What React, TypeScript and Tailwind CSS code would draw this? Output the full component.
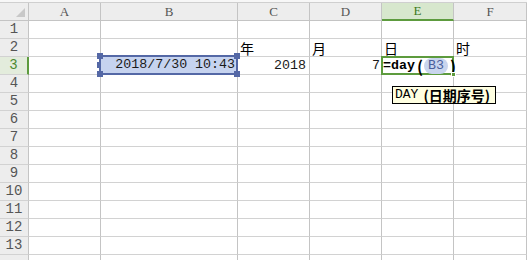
import React from "react";

const cols = ["A", "B", "C", "D", "E", "F"];
const mono = { fontFamily: '"Liberation Mono", "Noto Sans CJK SC", monospace' };
const cjk = { fontFamily: '"Noto Sans CJK SC", sans-serif' };

function Cell({ children, className = "" }: { children?: React.ReactNode; className?: string }) {
  return (
    <div className={`relative flex h-[18px] border-r border-b border-b-[#d2d2d2] border-r-[#c4c4c4] ${className}`}>
      {children}
    </div>
  );
}

function Handle({ pos }: { pos: string }) {
  return <span className={`absolute w-[6px] h-[6px] bg-[#5468a6] ${pos}`} />;
}

export default function App() {
  const rows = Array.from({ length: 14 }, (_, i) => i + 1);
  return (
    <div className="w-[527px] h-[260px] overflow-hidden bg-white select-none" style={mono}>
      <div className="h-[3px] bg-[#f7f7f7] border-b border-[#cfcfcf]" />
      <div className="grid grid-cols-[29px_72px_137px_72px_72px_72px_73px]">
        {/* header row */}
        <div className="flex items-end justify-end p-[3px] h-[18px] border-r border-b border-[#c4c4c4] bg-[#ededed]">
          <svg width="9" height="9" viewBox="0 0 9 9">
            <polygon points="9,0 9,9 0,9" fill="#c8c8c8" />
          </svg>
        </div>
        {cols.map((c) => (
          <div
            key={c}
            className={`h-[18px] flex items-center justify-center border-r text-[13px] ${
              c === "E"
                ? "bg-[#d7e7cd] border-b-2 border-b-[#5d9b3e] border-r-[#c4c4c4] text-[#3c7a22]"
                : "bg-[#ededed] border-b border-[#c4c4c4] text-[#555]"
            }`}
            style={{ fontFamily: '"Liberation Serif", serif' }}
          >
            {c}
          </div>
        ))}
        {rows.map((r) => (
          <React.Fragment key={r}>
            <div
              className={`h-[18px] flex items-center justify-center border-b border-[#d2d2d2] text-[14px] ${
                r === 3
                  ? "bg-[#e3ecdc] border-r-2 border-r-[#5d9b3e] text-[#4c8a30]"
                  : "bg-[#ededed] border-r border-r-[#c4c4c4] text-[#555]"
              }`}
            >
              {r < 14 ? r : ""}
            </div>
            {cols.map((c) => {
              let content: React.ReactNode = null;
              let cls = "";
              if (r === 2) {
                const m: Record<string, string> = { C: "年", D: "月", E: "日", F: "时" };
                if (m[c]) {
                  cls = "items-end pl-[2px]";
                  content = (
                    <span className="text-[14px] leading-[16px] text-black whitespace-nowrap" style={cjk}>
                      {m[c]}
                    </span>
                  );
                }
              }
              if (r === 3) {
                if (c === "B")
                  content = (
                    <div className="absolute left-[-2px] top-[-2px] w-[139px] h-[20px] border-2 border-[#5468a6] bg-[#c6d3ef] z-10 flex items-center justify-end pr-[1px]">
                      <span className="text-[13.3px] leading-[16px] text-[#1a1a1a]">2018/7/30 10:43</span>
                      <Handle pos="left-[-4px] top-[-4px]" />
                      <Handle pos="right-[-4px] top-[-4px]" />
                      <Handle pos="left-[-4px] bottom-[-4px]" />
                      <Handle pos="right-[-4px] bottom-[-4px]" />
                      <span className="absolute left-[-4px] top-[5px] w-[4px] h-[6px] bg-[#5468a6]" />
                    </div>
                  );
                if (c === "C") {
                  cls = "items-center justify-end pr-[3px]";
                  content = <span className="text-[13.3px] leading-[16px] text-[#1a1a1a]">2018</span>;
                }
                if (c === "D") {
                  cls = "items-center justify-end pr-[1px]";
                  content = <span className="text-[13.3px] leading-[16px] text-[#1a1a1a]">7</span>;
                }
                if (c === "E")
                  content = (
                    <div className="absolute left-[-1px] top-[-1px] w-[73px] h-[19px] border-2 border-[#5d9b3e] z-10 flex items-center">
                      <div className="flex items-center whitespace-nowrap text-[13.3px] leading-[16px] font-bold text-black">
                        <span>=day</span>
                        <span style={cjk} className="text-[16px] leading-[16px] ml-[2px]">(</span>
                        <span className="ml-[1px] px-[4px] rounded-[8px] bg-[#c9d5ee] text-[#4a5f9c] font-normal">B3</span>
                        <span style={cjk} className="text-[16px] leading-[16px] ml-[2px]">)</span>
                      </div>
                      <span className="absolute right-[-4px] bottom-[-4px] w-[5px] h-[5px] bg-[#5d9b3e] border border-white" />
                    </div>
                  );
              }
              if (r === 4 && c === "E")
                content = (
                  <div className="absolute left-[10px] top-[11px] w-[104px] h-[18px] bg-[#ffffe1] border border-black z-20 flex items-center pl-[2px] whitespace-nowrap text-[13px] leading-[16px] text-black">
                    <span>DAY</span>
                    <span className="font-bold ml-[5px] text-[14px]" style={cjk}>
                      (日期序号)
                    </span>
                  </div>
                );
              return (
                <Cell key={c} className={cls}>
                  {content}
                </Cell>
              );
            })}
          </React.Fragment>
        ))}
      </div>
    </div>
  );
}
